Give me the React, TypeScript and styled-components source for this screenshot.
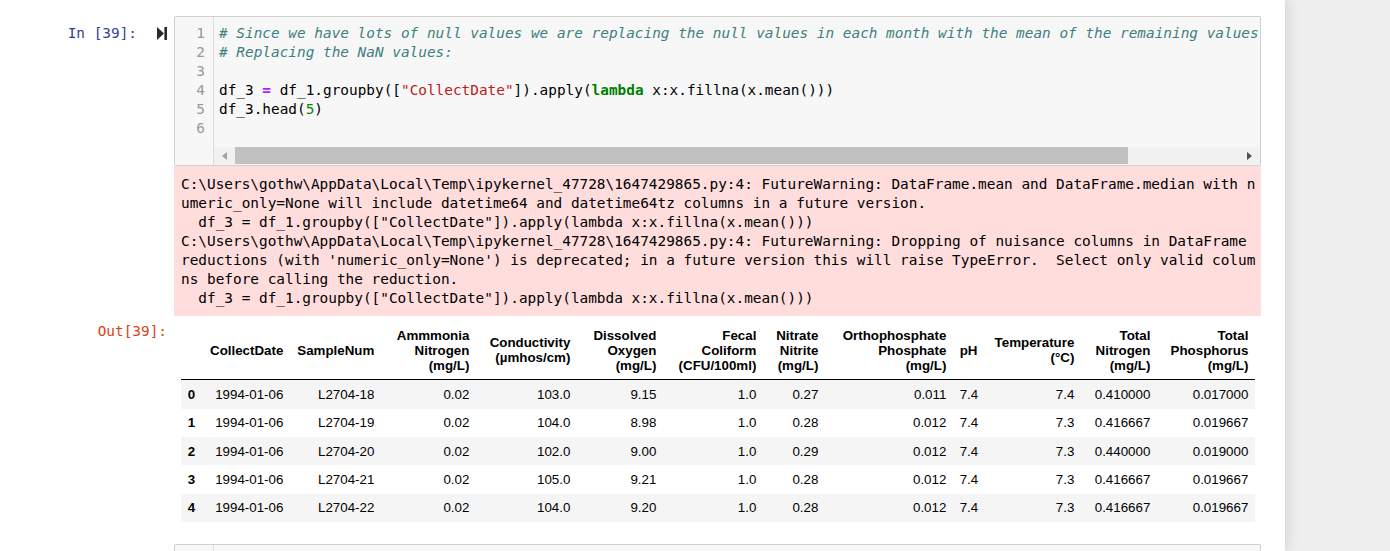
import React from "react";
import styled, { createGlobalStyle } from "styled-components";

const MONO = `"DejaVu Sans Mono", "Liberation Mono", monospace`;
const SANS = `"Liberation Sans", Arial, Helvetica, sans-serif`;

const GlobalStyle = createGlobalStyle`
  html, body { margin: 0; padding: 0; background: #eeeeee; }
  body { font-family: ${SANS}; overflow: hidden; }
  * { box-sizing: border-box; }
`;

const Notebook = styled.div`
  width: 1285px;
  height: 551px;
  background: #ffffff;
  box-shadow: 0 0 12px 1px rgba(87, 87, 87, 0.2);
  padding-top: 16px;
  overflow: hidden;
`;

const Row = styled.div`
  display: flex;
  flex-direction: row;
  align-items: flex-start;
`;

const Prompt = styled.div<{ $color: string; $top: number }>`
  width: 174px;
  flex-shrink: 0;
  padding-right: 7px;
  padding-top: ${(p) => p.$top}px;
  display: flex;
  justify-content: flex-end;
  align-items: center;
  gap: 20px;
  font-family: ${MONO};
  font-size: 14.4px;
  line-height: 19px;
  color: ${(p) => p.$color};
  white-space: pre;
`;

const RunIcon = styled.svg`
  width: 10px;
  height: 13px;
  display: block;
`;

const InputBox = styled.div`
  width: 1087px;
  display: flex;
  flex-direction: row;
  border: 1px solid #cfcfcf;
  border-radius: 2px;
  background: #f7f7f7;
  overflow: hidden;
`;

const Gutter = styled.div`
  width: 39px;
  flex-shrink: 0;
  border-right: 1px solid #dddddd;
  background: #f7f7f7;
  padding: 6.5px 8px 0 0;
  text-align: right;
  font-family: ${MONO};
  font-size: 14.4px;
  line-height: 19px;
  color: #999999;
`;

const CodeArea = styled.div`
  flex: 1;
  min-width: 0;
  display: flex;
  flex-direction: column;
`;

const CodeLines = styled.div<{ $bottom: number }>`
  padding: 6.5px 0 ${(p) => p.$bottom}px 5px;
  font-family: ${MONO};
  font-size: 14.4px;
  line-height: 19px;
  color: #000000;
  white-space: pre;
  overflow: hidden;
`;

const Line = styled.div`
  height: 19px;
`;

const Comment = styled.span`
  color: #408080;
  font-style: italic;
`;
const Op = styled.span`
  color: #aa22ff;
  font-weight: bold;
`;
const Str = styled.span`
  color: #ba2121;
`;
const Kw = styled.span`
  color: #008000;
  font-weight: bold;
`;
const Num = styled.span`
  color: #008800;
`;

const HScroll = styled.div`
  height: 17px;
  margin-bottom: 1px;
  display: flex;
  flex-direction: row;
  align-items: stretch;
  background: #f1f1f1;
`;

const ScrollArrow = styled.div`
  width: 21px;
  display: flex;
  align-items: center;
  justify-content: center;
`;

const Thumb = styled.div`
  width: 893px;
  background: #c1c1c1;
`;

const Track = styled.div`
  flex: 1;
`;

const Stderr = styled.div`
  width: 1087px;
  background: #ffdddd;
  padding: 9px 7px 8px 7px;
  font-family: ${MONO};
  font-size: 14.4px;
  line-height: 19px;
  color: #000000;
  white-space: pre;
  overflow: hidden;
`;

const TableWrap = styled.div`
  padding: 5px 0 0 7px;
`;

const DataTable = styled.table`
  width: 1074px;
  table-layout: fixed;
  border-collapse: collapse;
  border-spacing: 0;
  font-family: ${SANS};
  font-size: 13.33px;
  color: #000000;

  th, td {
    padding: 6.67px;
    text-align: right;
    vertical-align: middle;
    line-height: normal;
    white-space: nowrap;
    overflow: visible;
    border: none;
  }
  thead th {
    font-weight: bold;
  }
  thead tr {
    border-bottom: 1px solid #000000;
  }
  tbody th {
    font-weight: bold;
  }
  tbody tr:nth-child(odd) {
    background: #f5f5f5;
  }
`;

const NextCell = styled(Row)`
  margin-top: 22px;
`;

const EmptyBody = styled.div`
  height: 40px;
`;

const colWidths = [20, 89, 91, 95, 101, 86, 100, 62, 128, 31, 97, 76, 98];

const headers: string[][] = [
  [""],
  ["CollectDate"],
  ["SampleNum"],
  ["Ammmonia", "Nitrogen", "(mg/L)"],
  ["Conductivity", "(µmhos/cm)"],
  ["Dissolved", "Oxygen", "(mg/L)"],
  ["Fecal", "Coliform", "(CFU/100ml)"],
  ["Nitrate", "Nitrite", "(mg/L)"],
  ["Orthophosphate", "Phosphate", "(mg/L)"],
  ["pH"],
  ["Temperature", "(°C)"],
  ["Total", "Nitrogen", "(mg/L)"],
  ["Total", "Phosphorus", "(mg/L)"],
];

const rows: string[][] = [
  ["0", "1994-01-06", "L2704-18", "0.02", "103.0", "9.15", "1.0", "0.27", "0.011", "7.4", "7.4", "0.410000", "0.017000"],
  ["1", "1994-01-06", "L2704-19", "0.02", "104.0", "8.98", "1.0", "0.28", "0.012", "7.4", "7.3", "0.416667", "0.019667"],
  ["2", "1994-01-06", "L2704-20", "0.02", "102.0", "9.00", "1.0", "0.29", "0.012", "7.4", "7.3", "0.440000", "0.019000"],
  ["3", "1994-01-06", "L2704-21", "0.02", "105.0", "9.21", "1.0", "0.28", "0.012", "7.4", "7.3", "0.416667", "0.019667"],
  ["4", "1994-01-06", "L2704-22", "0.02", "104.0", "9.20", "1.0", "0.28", "0.012", "7.4", "7.3", "0.416667", "0.019667"],
];

const stderrLines = [
  "C:\\Users\\gothw\\AppData\\Local\\Temp\\ipykernel_47728\\1647429865.py:4: FutureWarning: DataFrame.mean and DataFrame.median with n",
  "umeric_only=None will include datetime64 and datetime64tz columns in a future version.",
  '  df_3 = df_1.groupby(["CollectDate"]).apply(lambda x:x.fillna(x.mean()))',
  "C:\\Users\\gothw\\AppData\\Local\\Temp\\ipykernel_47728\\1647429865.py:4: FutureWarning: Dropping of nuisance columns in DataFrame",
  "reductions (with 'numeric_only=None') is deprecated; in a future version this will raise TypeError.  Select only valid colum",
  "ns before calling the reduction.",
  '  df_3 = df_1.groupby(["CollectDate"]).apply(lambda x:x.fillna(x.mean()))',
];

export default function App() {
  return (
    <>
      <GlobalStyle />
      <Notebook>
        <Row>
          <Prompt $color="#303f9f" $top={7.5}>
            <span>In [39]:</span>
            <RunIcon viewBox="0 0 10 13">
              <path d="M0 0 L7 6.5 L0 13 Z" fill="#2a2a2a" />
              <rect x="7.4" y="0" width="2.6" height="13" fill="#2a2a2a" />
            </RunIcon>
          </Prompt>
          <InputBox>
            <Gutter>
              {[1, 2, 3, 4, 5, 6].map((n) => (
                <Line key={n}>{n}</Line>
              ))}
            </Gutter>
            <CodeArea>
              <CodeLines $bottom={9.5}>
                <Line>
                  <Comment># Since we have lots of null values we are replacing the null values in each month with the mean of the remaining values</Comment>
                </Line>
                <Line>
                  <Comment># Replacing the NaN values:</Comment>
                </Line>
                <Line> </Line>
                <Line>
                  df_3 <Op>=</Op> df_1.groupby([<Str>"CollectDate"</Str>]).apply(<Kw>lambda</Kw> x:x.fillna(x.mean()))
                </Line>
                <Line>
                  df_3.head(<Num>5</Num>)
                </Line>
                <Line> </Line>
              </CodeLines>
              <HScroll>
                <ScrollArrow>
                  <svg width="5" height="8" viewBox="0 0 5 8">
                    <path d="M5 0 L0 4 L5 8 Z" fill="#a3a3a3" />
                  </svg>
                </ScrollArrow>
                <Thumb />
                <Track />
                <ScrollArrow>
                  <svg width="5" height="8" viewBox="0 0 5 8">
                    <path d="M0 0 L5 4 L0 8 Z" fill="#505050" />
                  </svg>
                </ScrollArrow>
              </HScroll>
            </CodeArea>
          </InputBox>
        </Row>

        <Row>
          <Prompt $color="#d84315" $top={0} />
          <Stderr>
            {stderrLines.map((l, i) => (
              <Line key={i}>{l}</Line>
            ))}
          </Stderr>
        </Row>

        <Row>
          <Prompt $color="#d84315" $top={5.5}>
            <span>Out[39]:</span>
          </Prompt>
          <TableWrap>
            <DataTable>
              <colgroup>
                {colWidths.map((w, i) => (
                  <col key={i} style={{ width: w }} />
                ))}
              </colgroup>
              <thead>
                <tr>
                  {headers.map((h, i) => (
                    <th key={i}>
                      {h.map((part, j) => (
                        <React.Fragment key={j}>
                          {j > 0 && <br />}
                          {part}
                        </React.Fragment>
                      ))}
                    </th>
                  ))}
                </tr>
              </thead>
              <tbody>
                {rows.map((r, i) => (
                  <tr key={i}>
                    {r.map((c, j) =>
                      j === 0 ? <th key={j}>{c}</th> : <td key={j}>{c}</td>
                    )}
                  </tr>
                ))}
              </tbody>
            </DataTable>
          </TableWrap>
        </Row>

        <NextCell>
          <Prompt $color="#303f9f" $top={0} />
          <InputBox>
            <Gutter />
            <CodeArea>
              <EmptyBody />
            </CodeArea>
          </InputBox>
        </NextCell>
      </Notebook>
    </>
  );
}
